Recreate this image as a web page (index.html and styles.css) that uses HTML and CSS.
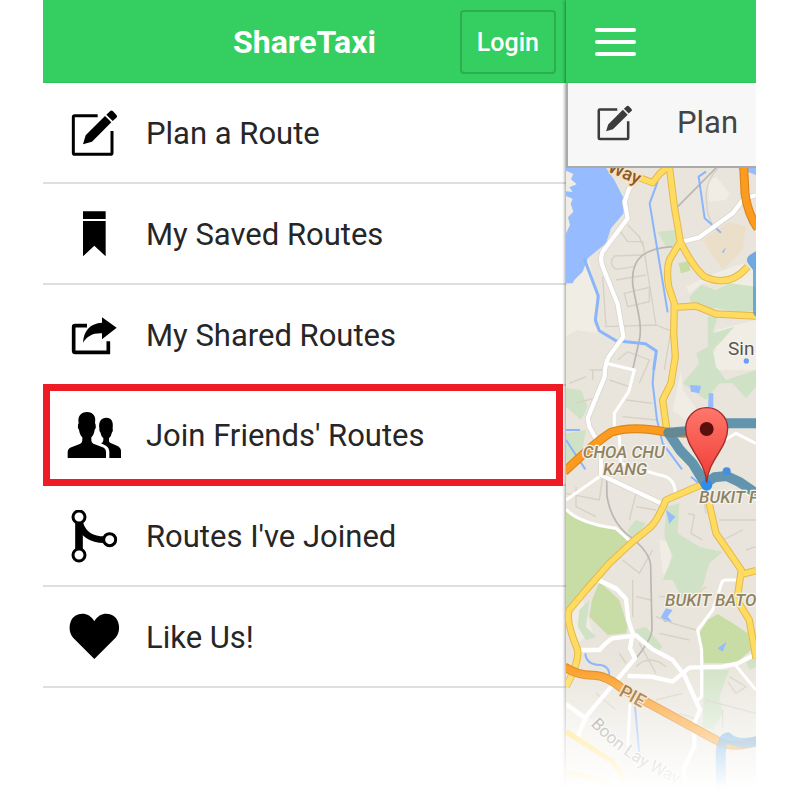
FILE: index.html
```html
<!DOCTYPE html>
<html lang="en">
<head>
<meta charset="utf-8">
<title>ShareTaxi</title>
<link rel="stylesheet" href="styles.css">
</head>
<body>
<div class="app">
  <aside class="drawer">
    <header class="bar drawer-bar">
      <h1 class="title">ShareTaxi</h1>
      <button class="login" type="button">Login</button>
    </header>
    <nav class="menu">
      <a class="item" href="#plan">
        <svg class="icon" viewBox="72 320 162 162" aria-hidden="true"><path d="M164 346H95Q91 346 91 350V458Q91 462 95 462H203Q207 462 207 458V392" fill="none" stroke="#000" stroke-width="9"/><path d="M120 432L128 405L186 347L205 366L147 424ZM190 343L202 332Q206 329 210 333L221 345Q224 349 220 352L209 362Z"/></svg>
        <span>Plan a Route</span>
      </a>
      <a class="item" href="#saved">
        <svg class="icon" viewBox="72 622 162 162" aria-hidden="true"><path d="M120 632H188V655H120ZM120 661H188V767L154 735L120 767Z"/></svg>
        <span>My Saved Routes</span>
      </a>
      <a class="item" href="#shared">
        <svg class="icon" viewBox="72 84 162 162" aria-hidden="true"><path d="M132 134H96Q92 134 92 138V209Q92 214 97 214H196V181" fill="none" stroke="#000" stroke-width="11"/><path d="M120 185C122 148 142 127 177 125V109L221 140L177 175V157C148 156 133 166 120 185Z"/></svg>
        <span>My Shared Routes</span>
      </a>
      <a class="item highlighted" href="#friends">
        <svg class="icon" viewBox="72 387 162 162" aria-hidden="true"><path d="M74 534V517Q74 506 85 502L112 491Q118 488 118 481V472Q110 465 108 449Q103 444 105 434L107 429C103 408 114 396 132 396S160 408 156 429L158 434Q160 444 155 449Q153 465 145 472V481Q145 488 151 491L179 502Q189 506 189 517V534Z"/><path d="M199 534V516Q199 504 189 497L174 490Q181 488 181 481V475Q174 469 172 457Q168 453 169 444C166 424 175 413 190 413S212 424 209 444Q211 453 207 457Q205 469 198 475V482Q198 487 203 489L222 497Q234 502 234 513V534Z"/></svg>
        <span>Join Friends' Routes</span>
      </a>
      <a class="item" href="#joined">
        <svg class="icon" viewBox="72 89 162 162" aria-hidden="true"><path d="M108 125V207" stroke="#000" stroke-width="23"/><path d="M110 128C122 166 148 178 184 178" fill="none" stroke="#000" stroke-width="20"/><g fill="#fff" stroke="#000" stroke-width="9"><circle cx="108" cy="110" r="18"/><circle cx="108" cy="224" r="18"/><circle cx="200" cy="178" r="18"/></g></svg>
        <span>Routes I've Joined</span>
      </a>
      <a class="item" href="#like">
        <svg class="icon" viewBox="72 392 162 162" aria-hidden="true"><path d="M154 536L91 473C79 461 77 440 83 424C93 396 136 389 154 423C172 389 215 396 225 424C231 440 229 461 217 473Z"/></svg>
        <span>Like Us!</span>
      </a>
    </nav>
  </aside>

  <main class="page">
    <header class="bar page-bar">
      <button class="burger" type="button" aria-label="Menu"><span></span><span></span><span></span></button>
    </header>
    <div class="tab">
      <svg class="tab-icon" viewBox="84 328 142 142" aria-hidden="true"><path d="M164 346H95Q91 346 91 350V458Q91 462 95 462H203Q207 462 207 458V392" fill="none" stroke="#3c3c3c" stroke-width="10"/><path fill="#3c3c3c" d="M120 432L128 405L186 347L205 366L147 424ZM190 343L202 332Q206 329 210 333L221 345Q224 349 220 352L209 362Z"/></svg>
      <span>Plan</span>
    </div>
    <div class="map">
      <svg class="map-art" viewBox="30 504 570 1896" preserveAspectRatio="xMinYMin slice" role="img" aria-label="Map">
        <defs>
          <linearGradient id="pin" x1="0" y1="0" x2="0" y2="1"><stop offset="0" stop-color="#ff776b"/><stop offset="1" stop-color="#ee3a34"/></linearGradient>
          <path id="boon" d="M103 2174Q210 2290 385 2362"/>
        </defs>
        <path fill="#e9e5dc" d="M30 504H600V2400H30Z"/>
        <!-- open ground -->
        <g fill="#f0ede4">
          <path d="M30 860L100 780L122 900L112 970L130 1000L60 990L30 1010ZM390 860L450 830L560 790L600 810V870L440 850L400 880ZM480 990L600 960V1110H430L480 1050ZM375 1110L380 1170L440 1250L400 1270L350 1230ZM455 545L480 530L520 580L510 600L460 605ZM310 1620L350 1630L340 1690L390 1740L320 1720ZM30 1850L80 1800L110 1900L60 1930ZM30 2110L110 2160L200 2230L180 2400H30Z"/>
        </g>
        <path fill="#ecdfc9" d="M440 720L520 665L570 680L560 750L500 810L465 760Z"/>
        <!-- parks -->
        <g fill="#d0e2c5">
          <path d="M400 890L435 855L480 870L520 850L600 860V930L560 940L480 925L410 925ZM455 950H485L470 1000L535 980L500 1020L470 1050L480 1100L510 1140L600 1110V1160L570 1195L530 1150L490 1150L450 1200L380 1150L430 1090L420 1060L455 1040ZM305 695L360 690V735L330 740ZM30 1165L75 1170L95 1220L75 1260L30 1220ZM30 1300L90 1290L80 1345L30 1390ZM330 1520L370 1510L365 1600L430 1640L500 1655L460 1690L440 1760L390 1820L350 1740L320 1740L350 1670L325 1610ZM215 1590L240 1560L270 1570L230 1620ZM70 1830L100 1800L90 1880L120 1910L90 1920L65 1880ZM235 1890L270 1880L320 1940L300 1960ZM445 2010H520L490 2090L500 2140L470 2190L440 2180ZM570 1985L600 1970V2000L580 2010Z"/>
        </g>
        <g fill="#c7dda5">
          <path d="M30 1530L100 1570L180 1590L228 1630L90 1770L30 1835ZM130 1745L190 1800L215 1880L210 1900L155 1905L100 1850L108 1800ZM455 1860L485 1842L530 1870L575 1900L585 1950L540 1990L445 1990L430 1900ZM368 790L400 782L402 812L375 820Z"/>
        </g>
        <!-- water -->
        <g fill="#96bcff">
          <path d="M30 504H150L175 540L203 595L203 640L165 685L150 730L95 775L80 815L55 840L50 850H30Z"/>
          <path d="M402 1155L435 1157L430 1180L405 1175ZM458 1180H472V1225H456ZM330 1530L358 1550L340 1572ZM315 1850L330 1825L350 1830L335 1850L348 1865H325ZM485 1945L512 1925L500 1955ZM497 755L510 742L503 760ZM545 504H600V525Z"/>
        </g>
        <path fill="#f0ede4" d="M30 512L52 522L45 538L62 553L40 562L50 576L30 574ZM30 588L50 596L44 612L52 635L36 652L42 675L30 700Z"/>
        <!-- side streets -->
        <g fill="none" stroke="#d6d1c5" stroke-width="4">
          <path d="M190 690L215 725H260L300 975L150 980L140 830M215 675L250 710L262 740M175 768L260 765M175 768Q155 790 180 808L235 800M180 840L270 825M205 880L280 862V905L215 920ZM300 975L350 995M325 1110L345 990M185 1080L215 1055L280 1080L250 1150M100 1110H145M110 1110V1140M160 1140L220 1160M210 1200L290 1210M200 1250L300 1260M60 1210L130 1190M40 1150L90 1130M30 1480L130 1500L140 1430M60 1460V1520L120 1550M180 1450L240 1480L220 1560M240 1520L300 1530M395 1540L415 1545L405 1600L440 1620M450 1540L440 1480M490 1560H600M500 1620L560 1590M570 1650L600 1640M290 1650L250 1720L200 1680M230 1740V1850M240 1790L285 1800M300 1850L350 1870L420 1890M310 1900L400 1920M250 1930L300 2020M190 1960L210 1990M240 2000Q280 1960 330 2000M520 2030L570 2060L540 2080L515 2045M450 2100L600 2140M380 2080L300 2100M120 2080L180 2130M310 1790H400M450 1760L400 1800M370 2140L430 2160M500 2130V2180M490 500Q450 540 450 590L455 640L475 690"/>
        </g>
        <!-- rail -->
        <g fill="none" stroke="#b9b7b3" stroke-width="5">
          <path d="M480 504L365 620M350 740C270 745 225 770 230 850C235 900 262 970 250 1020L230 1110M152 1440L153 1490Q165 1560 210 1600Q285 1655 284 1700L288 1890Q285 1920 240 1975"/>
        </g>
        <!-- streams -->
        <g fill="none" stroke="#8bb5fb" stroke-linejoin="round">
          <path stroke-width="9" d="M84 775L127 888L118 960L130 992L180 1022L268 1031L301 1053L293 1110"/>
          <path stroke-width="6" d="M293 1110L290 1150L303 1260L320 1330L378 1408M305 545L281 610L335 937M450 515L428 530L446 655L495 698M30 1290H72M30 1320L88 1408M88 1960Q90 1995 135 1995Q160 2000 160 2025M237 2120L250 2260M405 1430L440 1460"/>
        </g>
        <!-- white roads -->
        <g fill="none" stroke-linejoin="round">
          <path stroke="#d8d3c9" stroke-width="17" d="M245 535L220 565L206 605L215 655L140 755Q130 780 142 805L185 912L202 1010L158 1070Q145 1100 146 1130L95 1255L100 1280L135 1345V1425L315 1510M380 725L430 712L530 640L560 600L600 585"/>
          <g stroke="#fff" stroke-width="13">
            <path d="M245 535L220 565L206 605L215 655L140 755Q130 780 142 805L185 912L202 1010L158 1070Q145 1100 146 1130L95 1255L100 1280L135 1345V1425L315 1510M380 725L430 712L530 640L560 600L600 585"/>
            <path d="M65 1950H130Q160 1918 170 1915L240 1906L290 1948L350 1980L385 2025L432 2130L415 2170V2240L383 2305L390 2350M215 2028L285 2030L350 2045L400 2003L500 2000L545 1990L600 1962M125 1740L180 1765L210 1797L217 1860L230 1900L222 1945L237 1975L90 2150L60 2222M30 2112L92 2157"/>
          </g>
          <path stroke="#fff" stroke-width="9" d="M150 1090L235 1110L218 1175L175 1240V1275L190 1310L195 1390L310 1425Q357 1430 358 1480M30 1500L130 1430M30 1528Q70 1570 180 1585L230 1630M130 1740L180 1770M600 1500L550 1460M490 1330L540 1300L600 1330M500 1740L470 1830L425 1890L437 1950V2090L420 2105M500 1745L505 1740H555M538 1995L600 2070M222 2110L215 2240"/>
        </g>
        <!-- main roads -->
        <g fill="none" stroke-linejoin="round">
          <path stroke="#e2b84d" stroke-width="22" d="M250 533L290 548L312 520L340 498L355 620L373 725L340 780Q330 810 338 860L355 910L353 1000L358 1070L345 1150L320 1200L333 1295M373 725Q410 800 445 830Q520 865 575 800M353 922L420 918L480 942L600 948M435 1455L330 1500Q305 1560 285 1580L230 1625L160 1690L90 1770L40 1830Q28 1860 65 1950Q70 1985 30 2060M455 1490L480 1600L556 1710L543 1800L580 1860L600 1975M556 1723L600 1712"/>
          <path stroke="#ffdc60" stroke-width="16" d="M250 533L290 548L312 520L340 498L355 620L373 725L340 780Q330 810 338 860L355 910L353 1000L358 1070L345 1150L320 1200L333 1295M373 725Q410 800 445 830Q520 865 575 800M353 922L420 918L480 942L600 948M435 1455L330 1500Q305 1560 285 1580L230 1625L160 1690L90 1770L40 1830Q28 1860 65 1950Q70 1985 30 2060M455 1490L480 1600L556 1710L543 1800L580 1860L600 1975M556 1723L600 1712M30 2195L170 2285L210 2350M30 2320Q120 2320 220 2395"/>
          <path stroke="#df861a" stroke-width="27" d="M563 498L567 580Q575 640 605 685M25 1415Q120 1325 165 1297Q230 1275 340 1298L400 1300M25 2000Q60 2025 110 2026Q150 2025 200 2067L480 2220Q530 2250 605 2222"/>
          <path stroke="#fb9b20" stroke-width="20" d="M563 498L567 580Q575 640 605 685M25 1415Q120 1325 165 1297Q230 1275 340 1298L400 1300M25 2000Q60 2025 110 2026Q150 2025 200 2067L480 2220Q530 2250 605 2222"/>
        </g>
        <!-- planned route -->
        <g fill="none" stroke-linejoin="round" stroke-linecap="round">
          <path stroke="#4b86a6" stroke-opacity=".85" stroke-width="30" d="M337 1298L390 1294L510 1270H610M337 1298L372 1350L410 1390L447 1450L475 1432L512 1428L550 1446L610 1487"/>
          <path stroke="#3c8fe0" stroke-opacity=".7" stroke-width="34" d="M605 770L590 780L608 805V935"/>
          <path stroke="#4a9be0" stroke-opacity=".8" stroke-width="30" d="M495 2400L494 2270Q495 2215 515 2212Q545 2240 610 2222"/>
        </g>
        <circle cx="512" cy="1414" r="12" fill="#438fe0"/>
        <!-- place names -->
        <g class="place">
          <text x="80" y="1375">CHOA CHU</text>
          <text x="141" y="1426">KANG</text>
          <text x="429" y="1510">BUKIT P</text>
          <text x="327" y="1818">BUKIT BATO</text>
        </g>
        <text class="city" x="516" y="1066">Sin</text>
        <circle cx="571" cy="1083" r="8" fill="#6a9df5"/>
        <text class="road" transform="translate(152 514) rotate(23)">Way</text>
        <text class="road" transform="translate(186 2085) rotate(29)">PIE</text>
        <text class="street"><textPath href="#boon">Boon Lay Way</textPath></text>
        <!-- location pin -->
        <circle cx="452" cy="1455" r="17" fill="#2e8fea"/>
        <path d="M452 1448C447 1378 389 1345 389 1285A63 62 0 0 1 515 1285C515 1345 457 1378 452 1448Z" fill="url(#pin)" stroke="#9d2f2d" stroke-width="4"/>
        <circle cx="452" cy="1287" r="21" fill="#5b1010"/>
      </svg>
    </div>
  </main>
</div>
</body>
</html>
```
FILE: styles.css
```css
* { box-sizing: border-box; }

body {
  margin: 0;
  background: #fff;
  font-family: Roboto, "Liberation Sans", sans-serif;
  color: #222;
}

.app {
  display: grid;
  grid-template-columns: minmax(0, 523fr) minmax(0, 190fr);
  min-height: 100vh;
  margin: 0 44px 0 43px;
}

.bar {
  height: 83px;
  padding-top: 2px;
  background: #35ce60;
  border-bottom: 1px solid #2cc657;
  color: #fff;
}

.drawer-bar {
  display: grid;
  grid-template-columns: 1fr auto 1fr;
  align-items: center;
  padding-right: 10px;
  padding-left: 10px;
}

.title {
  grid-column: 2;
  margin: 0;
  font-size: 32px;
  font-weight: 700;
  line-height: 36px;
}

.login {
  justify-self: end;
  padding: 2px 15px 0;
  height: 64px;
  border: 2px solid #2bad50;
  border-radius: 4px;
  background: transparent;
  color: #fff;
  font: 500 25px/30px Roboto, "Liberation Sans", sans-serif;
}

.menu {
  display: grid;
  grid-template-rows: repeat(6, 1fr);
  height: 605px;
}

.item {
  position: relative;
  display: flex;
  align-items: center;
  gap: 25px;
  padding-top: 3px;
  padding-left: 24px;
  border-bottom: 2px solid #dfdfdf;
  color: #262626;
  font-size: 31px;
  line-height: 36px;
  text-decoration: none;
  white-space: nowrap;
}

.icon {
  flex: none;
  width: 54px;
  height: 54px;
}

.highlighted::after {
  content: "";
  position: absolute;
  inset: -2px 3px -2px 0;
  border: 7px solid #ee1c25;
}

.page {
  position: relative;
  display: flex;
  flex-direction: column;
  min-width: 0;
  box-shadow: -1px 0 3px rgba(0, 0, 0, 0.4);
  clip-path: inset(0 0 0 -4px);
}

.page::after {
  content: "";
  position: absolute;
  right: 0;
  bottom: 0;
  left: -4px;
  height: 140px;
  background: linear-gradient(rgba(255, 255, 255, 0), rgba(255, 255, 255, 0.55) 50%, #fff 92%);
}

.page-bar {
  display: flex;
  align-items: center;
  padding-left: 29px;
}

.burger {
  display: flex;
  flex-direction: column;
  gap: 8px;
  width: 41px;
  padding: 0;
  border: 0;
  background: transparent;
}

.burger span {
  height: 4px;
  border-radius: 2px;
  background: #fff;
}

.tab {
  display: flex;
  align-items: center;
  gap: 44px;
  height: 85px;
  padding: 0 0 4px 29px;
  border-left: 2px solid #aaa;
  border-bottom: 2px solid #aaa;
  background: #f7f7f7;
  color: #444;
  font-size: 31px;
  line-height: 36px;
  overflow: hidden;
}

.tab-icon {
  flex: none;
  width: 36px;
  height: 36px;
}

.map {
  flex: 1;
  overflow: hidden;
}

.map-art {
  display: block;
  width: 100%;
}

.place,
.city,
.road,
.street {
  paint-order: stroke;
  stroke: #f5f2ea;
  stroke-width: 8px;
  stroke-linejoin: round;
}

.place {
  fill: #8f8264;
  font-size: 51px;
  font-style: italic;
  font-weight: 500;
}

.city {
  fill: #555;
  font-size: 57px;
}

.road {
  fill: #8a5a2c;
  stroke: #fbe2bd;
  font-size: 54px;
  font-weight: 500;
}

.street {
  fill: #8c8c8c;
  font-size: 51px;
}
```
